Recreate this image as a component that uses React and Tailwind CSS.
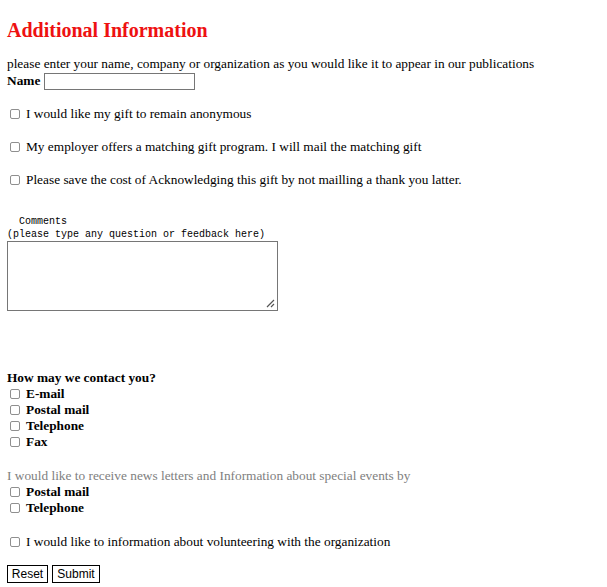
import React from "react";

function Box() {
  return (
    <span className="inline-block w-[10px] h-[10px] border border-[#8f8f8f] rounded-[2px] bg-white shrink-0 ml-[3px] mr-[6px]" />
  );
}

function CheckRow({ children, bold, className = "" }) {
  return (
    <div className={"flex items-center h-[16px] " + className}>
      <Box />
      <span className={bold ? "font-bold" : ""}>{children}</span>
    </div>
  );
}

export default function App() {
  return (
    <div className="bg-white text-black text-[13.33px] leading-[16px] pl-[7px] w-[607px] h-[587px] overflow-hidden font-['Liberation_Serif',serif]">
      <div className="h-[18px]" />
      <div className="h-[24px] flex items-center text-[20px] font-bold text-[#ee1111]">
        Additional Information
      </div>
      <div className="h-[14px]" />
      <div className="h-[16px] flex items-center">
        please enter your name, company or organization as you would like it to appear in our publications
      </div>
      <div className="h-[18px] flex items-center">
        <span className="font-bold mr-[4px]">Name</span>
        <span className="inline-block w-[151px] h-[17px] border border-[#767676]" />
      </div>
      <div className="h-[16px]" />
      <CheckRow>I would like my gift to remain anonymous</CheckRow>
      <CheckRow className="mt-[17px]">My employer offers a matching gift program. I will mail the matching gift</CheckRow>
      <CheckRow className="mt-[17px]">Please save the cost of Acknowledging this gift by not mailling a thank you latter.</CheckRow>

      <div className="mt-[27px] font-['Liberation_Mono',monospace] text-[10px] leading-[13px] whitespace-pre">
        {"  Comments\n(please type any question or feedback here)"}
      </div>
      <div className="relative w-[271px] h-[70px] border border-[#767676]">
        <svg className="absolute right-[2px] bottom-[2px]" width="10" height="10" viewBox="0 0 10 10">
          <path d="M9 2 L2 9 M9 6 L6 9" stroke="#555" strokeWidth="1.2" fill="none" />
        </svg>
      </div>

      <div className="mt-[59px] h-[16px] flex items-center font-bold">How may we contact you?</div>
      <CheckRow bold>E-mail</CheckRow>
      <CheckRow bold className="h-[16.5px]">Postal mail</CheckRow>
      <CheckRow bold className="h-[16.5px]">Telephone</CheckRow>
      <CheckRow bold>Fax</CheckRow>

      <div className="mt-[18px] h-[16px] flex items-center text-[#808080]">
        I would like to receive news letters and Information about special events by
      </div>
      <CheckRow bold>Postal mail</CheckRow>
      <CheckRow bold>Telephone</CheckRow>

      <CheckRow className="mt-[18px]">I would like to information about volunteering with the organization</CheckRow>

      <div className="mt-[15px] flex gap-[4px] font-['Liberation_Sans',sans-serif] text-[12px] leading-[14px]">
        <span className="w-[41px] h-[18px] border border-black flex items-center justify-center">Reset</span>
        <span className="w-[48px] h-[18px] border border-black flex items-center justify-center">Submit</span>
      </div>
    </div>
  );
}
